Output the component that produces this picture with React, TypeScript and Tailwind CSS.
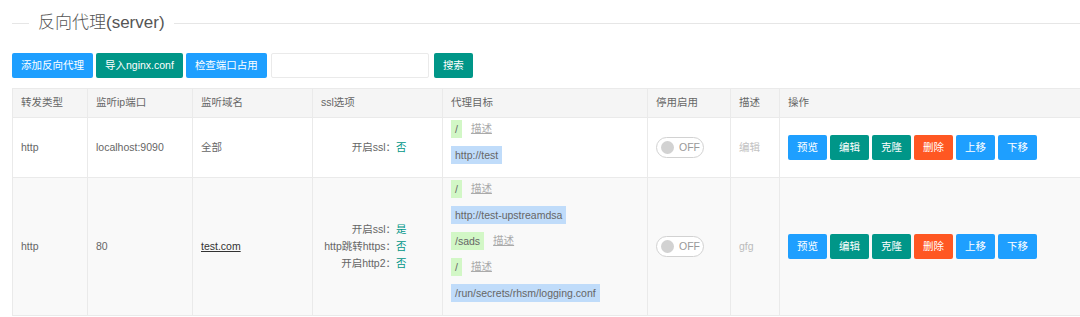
import React from "react";

type Target = { kind: "path" | "url"; text: string; desc?: boolean };

type Row = {
  type: string;
  listen: string;
  domain: string;
  domainLink?: boolean;
  ssl: { label: string; value: string }[];
  targets: Target[];
  descr: string;
  descrPlaceholder?: boolean;
  striped?: boolean;
};

const rows: Row[] = [
  {
    type: "http",
    listen: "localhost:9090",
    domain: "全部",
    ssl: [{ label: "开启ssl：", value: "否" }],
    targets: [
      { kind: "path", text: "/", desc: true },
      { kind: "url", text: "http://test" },
    ],
    descr: "编辑",
    descrPlaceholder: true,
  },
  {
    type: "http",
    listen: "80",
    domain: "test.com",
    domainLink: true,
    ssl: [
      { label: "开启ssl：", value: "是" },
      { label: "http跳转https：", value: "否" },
      { label: "开启http2：", value: "否" },
    ],
    targets: [
      { kind: "path", text: "/", desc: true },
      { kind: "url", text: "http://test-upstreamdsa" },
      { kind: "path", text: "/sads", desc: true },
      { kind: "path", text: "/", desc: true },
      { kind: "url", text: "/run/secrets/rhsm/logging.conf" },
    ],
    descr: "gfg",
    striped: true,
  },
];

const headers = ["转发类型", "监听ip端口", "监听域名", "ssl选项", "代理目标", "停用启用", "描述", "操作"];

function Btn({ color, children }: { color: string; children: React.ReactNode }) {
  return (
    <button className={`h-[25px] px-[9px] rounded-[2px] text-white text-[10.5px] leading-[25px] whitespace-nowrap ${color}`}>
      {children}
    </button>
  );
}

function Switch() {
  return (
    <div className="w-[48px] h-[21px] rounded-full border border-[#d2d2d2] bg-white flex items-center pl-[4px] gap-[5px]">
      <span className="w-[13px] h-[13px] rounded-full bg-[#d2d2d2]" />
      <span className="text-[10.5px] text-[#999]">OFF</span>
    </div>
  );
}

export default function App() {
  return (
    <div
      className="w-[1080px] h-[317px] bg-white overflow-hidden text-[#666]"
      style={{ fontFamily: '"Liberation Sans", "Noto Sans CJK SC", sans-serif' }}
    >
      {/* fieldset title */}
      <div className="pt-[11px] pl-3 flex items-center">
        <div className="w-[17px] h-px bg-[#e6e6e6]" />
        <span className="mx-[9px] text-[17px] leading-[24px] font-light text-[#555]">反向代理(server)</span>
        <div className="flex-1 h-px bg-[#e6e6e6]" />
      </div>

      {/* toolbar */}
      <div className="mt-[18px] pl-3 flex items-center gap-[3px]">
        <Btn color="bg-[#1e9fff]">添加反向代理</Btn>
        <Btn color="bg-[#009688]">导入nginx.conf</Btn>
        <Btn color="bg-[#1e9fff]">检查端口占用</Btn>
        <input className="ml-[1px] w-[158px] h-[25px] border border-[#eaeaea] rounded-[2px] outline-none px-2 text-[10.5px]" />
        <Btn color="bg-[#009688] ml-[2px]">搜索</Btn>
      </div>

      {/* table */}
      <div className="mt-[10px] pl-3 overflow-hidden">
        <table className="table-fixed border-collapse w-[1072px] text-[10.5px]">
          <colgroup>
            <col className="w-[75px]" />
            <col className="w-[105px]" />
            <col className="w-[120px]" />
            <col className="w-[130px]" />
            <col className="w-[205px]" />
            <col className="w-[83px]" />
            <col className="w-[49px]" />
            <col />
          </colgroup>
          <thead>
            <tr className="h-[29px] bg-[#f5f5f5]">
              {headers.map((h) => (
                <th key={h} className="border border-[#eaeaea] px-2 text-left font-normal text-[#666]">
                  {h}
                </th>
              ))}
            </tr>
          </thead>
          <tbody>
            {rows.map((r, i) => (
              <tr key={i} className={r.striped ? "bg-[#f9f9f9]" : "bg-white"}>
                <td className="border border-[#eaeaea] px-2 align-middle">{r.type}</td>
                <td className="border border-[#eaeaea] px-2 align-middle">{r.listen}</td>
                <td className="border border-[#eaeaea] px-2 align-middle">
                  {r.domainLink ? <span className="underline text-[#333]">{r.domain}</span> : r.domain}
                </td>
                <td className="border border-[#eaeaea] px-2 align-middle">
                  <div className="flex flex-col">
                    {r.ssl.map((s) => (
                      <div key={s.label} className="flex leading-[17px]">
                        <span className="w-[75px] text-right whitespace-nowrap">{s.label}</span>
                        <span className="text-[#009688]">{s.value}</span>
                      </div>
                    ))}
                  </div>
                </td>
                <td className="border border-[#eaeaea] px-2 pt-[2px] pb-[5px] align-top">
                  {r.targets.map((t, j) => (
                    <div key={j} className="flex items-center gap-[9px] h-[18px] mb-2">
                      <span
                        className={`h-[18px] leading-[18px] px-[4px] whitespace-nowrap ${
                          t.kind === "path" ? "bg-[#d2f7c6]" : "bg-[#c0dcfa]"
                        }`}
                      >
                        {t.text}
                      </span>
                      {t.desc && <span className="underline text-[#aaa]">描述</span>}
                    </div>
                  ))}
                </td>
                <td className="border border-[#eaeaea] px-2 align-middle">
                  <Switch />
                </td>
                <td className={`border border-[#eaeaea] px-2 align-middle ${r.descrPlaceholder ? "text-[#c2c2c2]" : "text-[#bbb]"}`}>
                  {r.descr}
                </td>
                <td className="border border-[#eaeaea] px-2 align-middle">
                  <div className="flex gap-[3px]">
                    <Btn color="bg-[#1e9fff]">预览</Btn>
                    <Btn color="bg-[#009688]">编辑</Btn>
                    <Btn color="bg-[#009688]">克隆</Btn>
                    <Btn color="bg-[#ff5722]">删除</Btn>
                    <Btn color="bg-[#1e9fff]">上移</Btn>
                    <Btn color="bg-[#1e9fff]">下移</Btn>
                  </div>
                </td>
              </tr>
            ))}
          </tbody>
        </table>
      </div>
    </div>
  );
}
